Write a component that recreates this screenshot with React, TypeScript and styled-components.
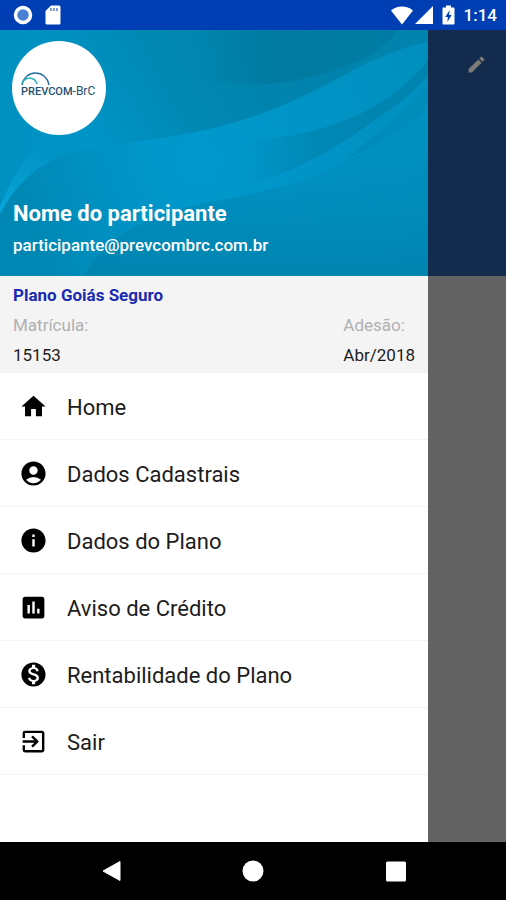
import React from "react";
import styled, { createGlobalStyle } from "styled-components";
import {
  MdHome,
  MdAccountCircle,
  MdInfo,
  MdAssessment,
  MdMonetizationOn,
  MdExitToApp,
  MdEdit,
} from "react-icons/md";

const GlobalStyle = createGlobalStyle`
  *, *::before, *::after { box-sizing: border-box; }
  body { margin: 0; font-family: Roboto, "Noto Sans", sans-serif; color: #1c1c1c; }
`;

const Screen = styled.div`
  display: flex;
  flex-direction: column;
  min-height: 100vh;
  background: #fff;
`;

const StatusBar = styled.header`
  display: flex;
  align-items: center;
  justify-content: space-between;
  height: 30px;
  padding: 0 9px 0 13px;
  background: #003fb3;
  color: #fff;
`;

const StatusGroup = styled.div<{ $gap: number }>`
  display: flex;
  align-items: center;
  gap: ${(p) => p.$gap}px;
`;

const Clock = styled.time`
  font-size: 17px;
  line-height: 24px;
  font-weight: 500;
`;

const Body = styled.div`
  display: grid;
  grid-template-columns: minmax(0, 428fr) minmax(0, 78fr);
  flex: 1;
`;

const Drawer = styled.aside`
  display: flex;
  flex-direction: column;
  background: #fff;
`;

const Backdrop = styled.div`
  display: flex;
  flex-direction: column;
  background: #626262;
`;

const BackdropBar = styled.div`
  display: flex;
  align-items: flex-start;
  justify-content: flex-end;
  height: 246px;
  padding: 24px 19px;
  background: #132b4d;
`;

const EditButton = styled.button`
  display: flex;
  padding: 0;
  border: 0;
  background: none;
  color: #7b7d76;
`;

const Profile = styled.section`
  position: relative;
  display: flex;
  flex-direction: column;
  justify-content: space-between;
  height: 246px;
  padding: 11px 12px 16px;
  overflow: hidden;
  background: #0095c8;
  color: #fff;
`;

const Waves = styled.svg`
  position: absolute;
  inset: 0;
  width: 100%;
  height: 100%;
`;

const Avatar = styled.div`
  position: relative;
  display: flex;
  align-items: center;
  justify-content: center;
  width: 94px;
  height: 94px;
  border-radius: 50%;
  background: #fff;
`;

const Identity = styled.div`
  position: relative;
  padding-left: 1px;
`;

const Name = styled.h1`
  margin: 0;
  font-size: 22px;
  line-height: 32px;
  font-weight: 700;
`;

const Email = styled.p`
  margin: 0;
  font-size: 17px;
  line-height: 30px;
  font-weight: 500;
`;

const Plan = styled.section`
  padding: 4px 13px 3px;
  background: #f4f4f4;
`;

const PlanName = styled.h2`
  margin: 0;
  font-size: 17px;
  line-height: 30px;
  font-weight: 700;
  color: #1a2bb0;
`;

const PlanFacts = styled.dl`
  display: flex;
  justify-content: space-between;
  margin: 0;
  font-size: 17px;
  line-height: 30px;
`;

const FactLabel = styled.dt`
  color: #b0b0b0;
`;

const FactValue = styled.dd`
  margin: 0;
`;

const Menu = styled.ul`
  margin: 0;
  padding: 0;
  list-style: none;
`;

const MenuItem = styled.li`
  height: 67px;
  border-bottom: 1px solid #f4f4f4;
`;

const MenuLink = styled.a`
  display: flex;
  align-items: center;
  gap: 19px;
  height: 100%;
  padding: 0 19px;
  font-size: 22px;
  line-height: 28px;
  color: #1c1c1c;
  text-decoration: none;

  svg { color: #000; flex: none; }
`;

const MenuLabel = styled.span`
  padding-top: 4px;
`;

const NavBar = styled.nav`
  display: flex;
  align-items: center;
  justify-content: space-around;
  height: 58px;
  padding: 0 40px;
  background: #000;
`;

const NavButton = styled.button`
  display: flex;
  padding: 0;
  border: 0;
  background: none;
`;

const menu = [
  { label: "Home", Icon: MdHome },
  { label: "Dados Cadastrais", Icon: MdAccountCircle },
  { label: "Dados do Plano", Icon: MdInfo },
  { label: "Aviso de Crédito", Icon: MdAssessment },
  { label: "Rentabilidade do Plano", Icon: MdMonetizationOn },
  { label: "Sair", Icon: MdExitToApp },
];

const facts = [
  { label: "Matrícula:", value: "15153" },
  { label: "Adesão:", value: "Abr/2018" },
];

function HeaderWaves() {
  return (
    <Waves viewBox="0 0 428 246" preserveAspectRatio="none" aria-hidden="true">
      <defs>
        <radialGradient id="base" gradientUnits="userSpaceOnUse" cx="200" cy="130" r="250">
          <stop offset="0" stopColor="#0099cd" />
          <stop offset="0.5" stopColor="#0094c6" />
          <stop offset="1" stopColor="#008fbd" />
        </radialGradient>
        <linearGradient id="upper" gradientUnits="userSpaceOnUse" x1="80" y1="90" x2="250" y2="10">
          <stop offset="0" stopColor="#0086b0" stopOpacity="0" />
          <stop offset="0.5" stopColor="#0086b0" stopOpacity="0.85" />
          <stop offset="1" stopColor="#0083ac" />
        </linearGradient>
        <linearGradient id="peak" x1="0" y1="0" x2="1" y2="0">
          <stop offset="0" stopColor="#007aa1" stopOpacity="0" />
          <stop offset="0.4" stopColor="#007aa1" />
          <stop offset="1" stopColor="#007ca4" />
        </linearGradient>
        <linearGradient id="glow" gradientUnits="userSpaceOnUse" x1="0" y1="180" x2="40" y2="112">
          <stop offset="0" stopColor="#08a4d8" />
          <stop offset="1" stopColor="#08a4d8" stopOpacity="0" />
        </linearGradient>
        <linearGradient id="left" gradientUnits="userSpaceOnUse" x1="30" y1="200" x2="160" y2="150">
          <stop offset="0" stopColor="#0087b3" />
          <stop offset="1" stopColor="#008fc0" stopOpacity="0" />
        </linearGradient>
        <linearGradient id="ribbon" gradientUnits="userSpaceOnUse" x1="245" y1="0" x2="428" y2="0">
          <stop offset="0" stopColor="#0086b2" stopOpacity="0" />
          <stop offset="0.4" stopColor="#0086b2" stopOpacity="0.9" />
          <stop offset="1" stopColor="#0083af" />
        </linearGradient>
        <linearGradient id="low" x1="0" y1="0" x2="0" y2="1">
          <stop offset="0" stopColor="#0092c2" stopOpacity="0.4" />
          <stop offset="1" stopColor="#0084b0" />
        </linearGradient>
      </defs>
      <rect width="428" height="246" fill="url(#base)" />
      <path d="M0 0H428V12C400 18 375 28 350 42C310 64 255 92 190 103C160 109 120 114 60 120L0 120Z" fill="url(#upper)" />
      <path d="M200 0H398C384 22 340 46 270 54C240 56 220 52 200 50Z" fill="url(#peak)" />
      <path d="M0 176C14 146 24 128 40 112L80 118C44 134 22 156 0 184Z" fill="url(#glow)" />
      <path d="M0 184C22 142 52 126 90 117C130 110 170 110 200 130V200L84 246H0Z" fill="url(#left)" />
      <path d="M428 30C400 66 355 94 290 106L236 112V158C300 142 345 112 375 90C400 74 416 60 428 46Z" fill="url(#ribbon)" />
      <path d="M428 74C416 92 385 112 345 130C375 104 410 80 428 54Z" fill="#0089b6" opacity="0.6" />
      <path d="M84 246C104 206 150 184 205 173C255 164 310 152 350 130C385 112 412 96 428 76V246Z" fill="url(#low)" />
    </Waves>
  );
}

function Logo() {
  return (
    <svg width="80" height="32" viewBox="0 0 80 32" role="img" aria-label="PREVCOM-BrC">
      <path d="M3 13C6 -3 27 -3 30 13" fill="none" stroke="#2a6d9a" strokeWidth="1.5" />
      <path d="M3 11C7 4 16 5 18 12" fill="none" stroke="#2bb5bd" strokeWidth="1.6" />
      <text x="2" y="23" fontFamily="Roboto, sans-serif" fontSize="11" fontWeight="500" fill="#24506f">
        PREVCOM<tspan fontSize="12" fontWeight="400">-BrC</tspan>
      </text>
    </svg>
  );
}

export default function App() {
  return (
    <Screen>
      <GlobalStyle />
      <StatusBar>
        <StatusGroup $gap={12}>
          <svg width="20" height="20" viewBox="0 0 20 20" aria-hidden="true">
            <circle cx="10" cy="10" r="7.5" fill="#4a80d4" stroke="#fff" strokeWidth="3.5" />
          </svg>
          <svg width="16" height="20" viewBox="0 0 16 20" aria-hidden="true">
            <path d="M6 0.500H14Q15.500 0.500 15.500 2V18Q15.500 19.500 14 19.500H2Q0.500 19.500 0.500 18V6Z" fill="#fff" />
            <path d="M6 3V6M9 3V6M12 3V6" stroke="#3d6bc6" strokeWidth="1.3" />
          </svg>
        </StatusGroup>
        <StatusGroup $gap={9}>
          <StatusGroup $gap={2}>
            <svg width="22" height="19" viewBox="0 0 22 19" aria-hidden="true">
              <path d="M0 4.500C6 -0.800 16 -0.800 22 4.500L11 18.500Z" fill="#fff" />
            </svg>
            <svg width="18" height="18" viewBox="0 0 18 18" aria-hidden="true">
              <path d="M18 0V18H0Z" fill="#fff" />
            </svg>
          </StatusGroup>
          <svg width="13" height="20" viewBox="0 0 12 20" aria-hidden="true">
            <path d="M3.500 0.500H8.500V2.500H11Q12 2.500 12 3.500V18.500Q12 19.500 11 19.500H1Q0 19.500 0 18.500V3.500Q0 2.500 1 2.500H3.500Z" fill="#fff" />
            <path d="M7.200 5L2.800 12H5.400L4.800 17L9.200 10H6.600Z" fill="#003fb3" />
          </svg>
          <Clock>1:14</Clock>
        </StatusGroup>
      </StatusBar>
      <Body>
        <Drawer>
          <Profile>
            <HeaderWaves />
            <Avatar>
              <Logo />
            </Avatar>
            <Identity>
              <Name>Nome do participante</Name>
              <Email>participante@prevcombrc.com.br</Email>
            </Identity>
          </Profile>
          <Plan>
            <PlanName>Plano Goiás Seguro</PlanName>
            <PlanFacts>
              {facts.map((f) => (
                <div key={f.label}>
                  <FactLabel>{f.label}</FactLabel>
                  <FactValue>{f.value}</FactValue>
                </div>
              ))}
            </PlanFacts>
          </Plan>
          <Menu>
            {menu.map(({ label, Icon }) => (
              <MenuItem key={label}>
                <MenuLink href="#">
                  <Icon size={29} aria-hidden="true" />
                  <MenuLabel>{label}</MenuLabel>
                </MenuLink>
              </MenuItem>
            ))}
          </Menu>
        </Drawer>
        <Backdrop>
          <BackdropBar>
            <EditButton aria-label="Editar">
              <MdEdit size={21} />
            </EditButton>
          </BackdropBar>
        </Backdrop>
      </Body>
      <NavBar>
        <NavButton aria-label="Voltar">
          <svg width="22" height="22" viewBox="0 0 22 22">
            <path d="M20 1.500V20.500L3 11Z" fill="#fff" stroke="#fff" strokeLinejoin="round" />
          </svg>
        </NavButton>
        <NavButton aria-label="Início">
          <svg width="22" height="22" viewBox="0 0 22 22">
            <circle cx="11" cy="11" r="10.500" fill="#fff" />
          </svg>
        </NavButton>
        <NavButton aria-label="Recentes">
          <svg width="22" height="22" viewBox="0 0 22 22">
            <rect x="2" y="1.500" width="20" height="20" rx="1.500" fill="#fff" />
          </svg>
        </NavButton>
      </NavBar>
    </Screen>
  );
}
